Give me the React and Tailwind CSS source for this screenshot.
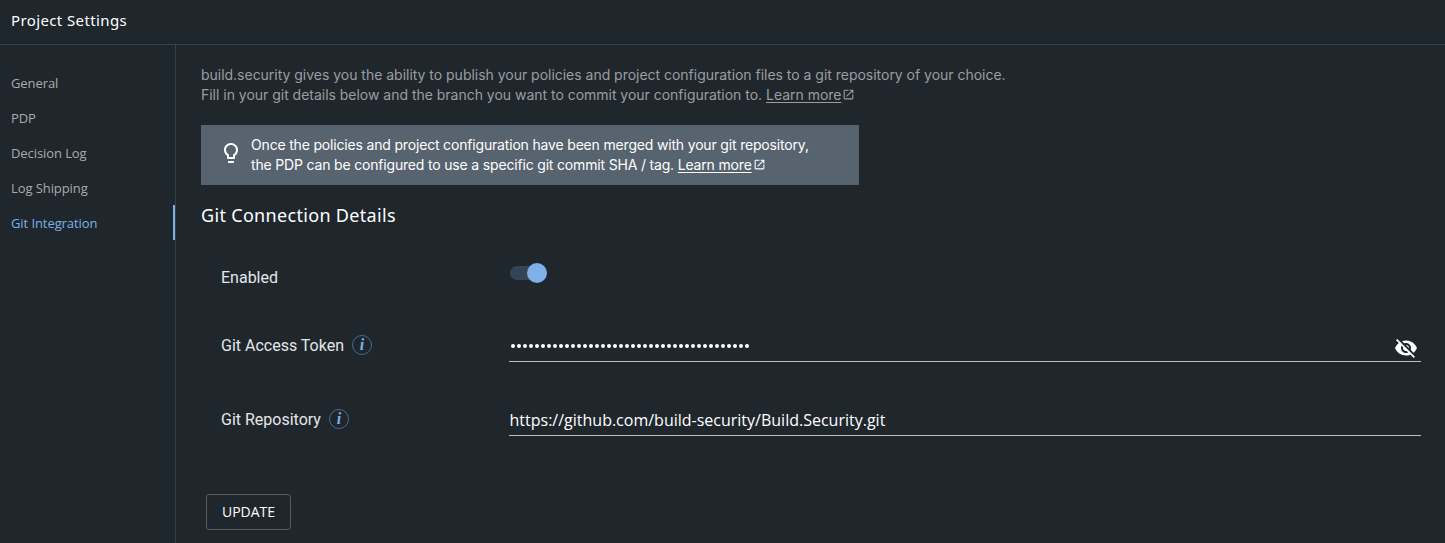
import { MdOutlineLightbulb, MdVisibilityOff, MdOpenInNew } from "react-icons/md";

const NAV = ["General", "PDP", "Decision Log", "Log Shipping", "Git Integration"];

function LearnMore() {
  return (
    <a className="whitespace-nowrap">
      <span className="underline underline-offset-2">Learn more</span>
      <MdOpenInNew className="ml-px inline-block h-[13px] w-[13px] align-[-1px]" />
    </a>
  );
}

function Info() {
  return (
    <span className="ml-2 flex h-5 w-5 items-center justify-center rounded-full border border-[#4a6a8e] font-['Liberation_Serif',serif] text-[16px] leading-none font-bold text-[#7fb0e8] italic">
      i
    </span>
  );
}

function Label({ children, info }) {
  return (
    <div className="flex h-6 w-[288px] shrink-0 items-center font-['Roboto',sans-serif] text-[16px] text-[#e6e7e8]">
      <span className="pt-px">{children}</span>
      {info && <Info />}
    </div>
  );
}

export default function App() {
  return (
    <div className="flex h-[543px] w-[1445px] flex-col overflow-hidden bg-[#1f262c] font-['Open_Sans',sans-serif] text-white">
      <header className="flex h-[45px] shrink-0 items-center border-b border-[#2f4349] pb-[4px] pl-[11px]">
        <h1 className="font-['Noto_Sans',sans-serif] text-[15px] leading-5 tracking-[0.38px]">Project Settings</h1>
      </header>
      <div className="flex min-h-0 flex-1">
        <nav className="flex w-[176px] shrink-0 flex-col border-r border-[#2f4349] pt-5 tracking-[-0.08px]">
          {NAV.map((item) => (
            <a
              key={item}
              className={
                item === "Git Integration"
                  ? "flex h-[35px] items-center border-r-2 border-[#7fb0e8] pt-[2px] pl-[11px] text-[13px] text-[#7fb0e8]"
                  : "flex h-[35px] items-center pt-[2px] pl-[11px] text-[13px] text-[#a9acae]"
              }
            >
              {item}
            </a>
          ))}
        </nav>
        <main className="flex-1 pt-5 pr-6 pl-[25px]">
          <p className="font-['Inter',sans-serif] text-[14px] leading-5 tracking-[-0.02px] text-[#9b9ea0]">
            build.security gives you the ability to publish your policies and project configuration files to a git repository of your choice.
            <br />
            Fill in your git details below and the branch you want to commit your configuration to. <LearnMore />
          </p>
          <div className="mt-5 flex h-[60px] w-[658px] items-center bg-[#57636f] pl-[18px]">
            <MdOutlineLightbulb className="mb-1 h-6 w-6 shrink-0" />
            <p className="ml-2 font-['Inter',sans-serif] text-[14px] leading-5 tracking-[-0.175px]">
              Once the policies and project configuration have been merged with your git repository,
              <br />
              the PDP can be configured to use a specific git commit SHA / tag. <LearnMore />
            </p>
          </div>
          <h2 className="mt-[18px] font-['Noto_Sans',sans-serif] text-[18px] leading-6 tracking-[0.32px]">Git Connection Details</h2>
          <div className="mt-9 flex h-6 items-center pl-5">
            <div className="pt-[5px]">
              <Label>Enabled</Label>
            </div>
            <div className="mb-[5px] flex h-5 w-[38px] items-center">
              <span className="ml-px h-[14px] w-[34px] rounded-full bg-[#334454]" />
              <span className="-ml-[17px] h-5 w-5 shrink-0 rounded-full bg-[#7fb0e8]" />
            </div>
          </div>
          <div className="mt-[43px] flex items-start pl-5">
            <div className="pt-[3px]">
              <Label info>Git Access Token</Label>
            </div>
            <div className="flex h-[32px] flex-1 justify-between border-b border-[#bfc1bd]">
              <div className="mt-[14px] ml-[1.5px] flex gap-[2px]">
                {Array.from({ length: 40 }, (_, i) => (
                  <span key={i} className="h-1 w-1 rounded-full bg-white" />
                ))}
              </div>
              <MdVisibilityOff className="mt-[6px] mr-[3px] h-6 w-6" />
            </div>
          </div>
          <div className="mt-[45px] flex items-start pl-5">
            <Label info>Git Repository</Label>
            <div className="h-[29px] flex-1 border-b border-[#bfc1bd] pl-[0.5px] text-[16px] leading-[26px]">
              https://github.com/build-security/Build.Security.git
            </div>
          </div>
          <button className="mt-[58px] ml-[5px] flex h-9 w-[85px] items-center justify-center rounded-[3px] border border-[#555a5c] pb-[2px] text-[14px]">
            UPDATE
          </button>
        </main>
      </div>
    </div>
  );
}
